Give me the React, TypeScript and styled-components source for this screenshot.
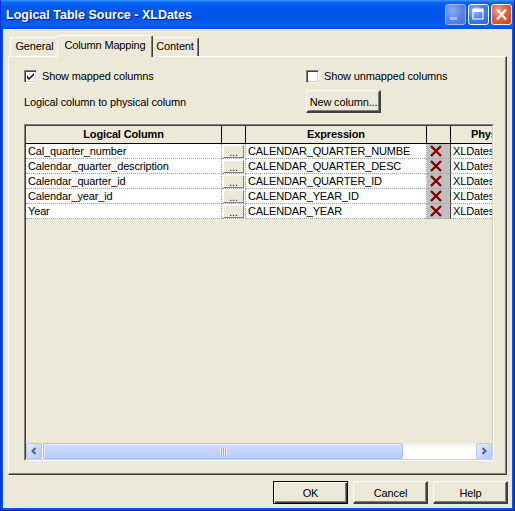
import styled, { createGlobalStyle } from "styled-components";

const GlobalStyle = createGlobalStyle`
  html, body {
    margin: 0;
    padding: 0;
  }
  body {
    width: 515px;
    height: 511px;
    overflow: hidden;
    font-family: "Liberation Sans", Arial, sans-serif;
    font-size: 11px;
    letter-spacing: -0.15px;
    color: #000;
  }
`;

const Window = styled.div`
  width: 515px;
  height: 511px;
  box-sizing: border-box;
  display: flex;
  flex-direction: column;
  background: #0054e3;
  border-left: 1px solid #0831d9;
  border-right: 1px solid #001ea0;
  border-bottom: 1px solid #001ea0;
`;

const TitleBar = styled.div`
  height: 29px;
  flex: none;
  display: flex;
  align-items: center;
  padding: 0 2px 0 5px;
  background: linear-gradient(
    180deg,
    #3d95ff 0%,
    #0a66f6 8%,
    #0058ee 22%,
    #0054e8 60%,
    #0060f5 88%,
    #0048d8 100%
  );
`;

const Title = styled.div`
  flex: 1;
  color: #fff;
  font-weight: bold;
  font-size: 12.5px;
  letter-spacing: 0;
  text-shadow: 1px 1px #0a1883;
  padding-top: 1px;
`;

const CaptionButtons = styled.div`
  display: flex;
  gap: 2px;
`;

const CaptionButton = styled.div<{ $kind: "min" | "max" | "close" }>`
  width: 21px;
  height: 21px;
  box-sizing: border-box;
  border-radius: 3px;
  border: 1px solid ${(p) => (p.$kind === "min" ? "#9db4ef" : "#fff")};
  display: flex;
  align-items: center;
  justify-content: center;
  background: ${(p) =>
    p.$kind === "close"
      ? "radial-gradient(circle at 35% 30%, #f0a58c 0%, #e2613f 45%, #c8421e 100%)"
      : p.$kind === "min"
      ? "radial-gradient(circle at 35% 30%, #8faaf0 0%, #5b80e6 55%, #4a6fdc 100%)"
      : "radial-gradient(circle at 35% 30%, #9bbcfc 0%, #3f7af5 50%, #2a62e8 100%)"};
`;

const Client = styled.div`
  flex: 1;
  margin: 0 2px 2px 2px;
  background: #ece9d8;
  padding: 6px 5px 0 5px;
  display: flex;
  flex-direction: column;
`;

const TabStrip = styled.div`
  height: 21px;
  display: flex;
  align-items: flex-end;
  padding-left: 2px;
  position: relative;
  z-index: 1;
`;

const Tab = styled.div<{ $active?: boolean; $w: number }>`
  box-sizing: border-box;
  width: ${(p) => p.$w + (p.$active ? 4 : 0)}px;
  height: ${(p) => (p.$active ? 22 : 19)}px;
  margin: ${(p) => (p.$active ? "0 -2px -1px -2px" : "0")};
  padding-top: ${(p) => (p.$active ? 3 : 2)}px;
  background: #ece9d8;
  border-top: 1px solid #fff;
  border-left: 1px solid #fff;
  border-right: 1px solid #404040;
  box-shadow: inset -1px 0 #808080;
  border-radius: 2px 2px 0 0;
  text-align: center;
  position: relative;
  z-index: ${(p) => (p.$active ? 2 : 1)};
`;

const Panel = styled.div`
  height: 419px;
  box-sizing: border-box;
  border: 1px solid;
  border-color: #fff #404040 #404040 #fff;
  box-shadow: inset -1px -1px #808080;
  padding: 13px 0 0 15px;
`;

const OptionRow = styled.div<{ $h: number; $top: number }>`
  display: grid;
  grid-template-columns: 282px auto;
  align-items: center;
  height: ${(p) => p.$h}px;
  margin-top: ${(p) => p.$top}px;
`;

const CheckLabel = styled.label`
  display: flex;
  align-items: center;
  gap: 5px;
  line-height: 13px;
`;

const CheckBox = styled.span`
  width: 13px;
  height: 13px;
  box-sizing: border-box;
  background: #fff;
  border: 1px solid;
  border-color: #808080 #fff #fff #808080;
  box-shadow: inset 1px 1px #404040, inset -1px -1px #d4d0c8;
  display: flex;
  align-items: center;
  justify-content: center;
`;

const Button = styled.div<{ $default?: boolean }>`
  width: 75px;
  height: 23px;
  box-sizing: border-box;
  background: #ece9d8;
  display: flex;
  align-items: center;
  justify-content: center;
  border: 1px solid ${(p) => (p.$default ? "#000" : "#fff")};
  box-shadow: ${(p) =>
    p.$default
      ? "inset 1px 1px #fff, inset -1px -1px #404040, inset -2px -2px #808080"
      : "inset -1px -1px #404040, inset 1px 1px #ece9d8, inset -2px -2px #808080"};
  border-right-color: ${(p) => (p.$default ? "#000" : "#404040")};
  border-bottom-color: ${(p) => (p.$default ? "#000" : "#404040")};
`;

const GridBox = styled.div`
  width: 470px;
  height: 337px;
  box-sizing: border-box;
  margin-top: 11px;
  border: 1px solid;
  border-color: #808080 #fff #fff #808080;
`;

const GridInner = styled.div`
  height: 100%;
  box-sizing: border-box;
  border: 1px solid;
  border-color: #404040 #d4d0c8 #d4d0c8 #404040;
  background: #ece9d8;
  display: flex;
  flex-direction: column;
`;

const columns = "196px 24px 181px 24px 1fr";

const HeaderRow = styled.div`
  display: grid;
  grid-template-columns: ${columns};
  height: 18px;
  box-sizing: border-box;
  border-bottom: 1px solid #000;
  flex: none;
`;

const HeaderCell = styled.div<{ $offset?: number }>`
  border-right: 1px solid #000;
  font-weight: bold;
  line-height: 17px;
  text-align: ${(p) => (p.$offset ? "left" : "center")};
  padding-left: ${(p) => p.$offset ?? 0}px;
  white-space: nowrap;
  overflow: hidden;
  &:last-child {
    border-right: none;
  }
`;

const DataRow = styled.div`
  display: grid;
  grid-template-columns: ${columns};
  height: 15px;
  flex: none;
`;

const Cell = styled.div<{ $grey?: boolean }>`
  box-sizing: border-box;
  background: ${(p) => (p.$grey ? "#c0c0c0" : "#fff")};
  border-right: 1px ${(p) => (p.$grey ? "solid #404040" : "dotted #a0a0a0")};
  border-bottom: 1px dotted #a0a0a0;
  padding-left: 2px;
  line-height: 14px;
  white-space: nowrap;
  overflow: hidden;
  display: flex;
  align-items: center;
  &:last-child {
    border-right: none;
  }
`;

const ButtonCell = styled.div`
  box-sizing: border-box;
  border-right: 1px dotted #a0a0a0;
  border-bottom: 1px dotted #a0a0a0;
  background: #fff;
  padding: 1px 1px 0 1px;
`;

const EllipsisButton = styled.div`
  height: 13px;
  box-sizing: border-box;
  background: #ece9d8;
  border: 1px solid;
  border-color: #fff #808080 #808080 #fff;
  text-align: center;
  line-height: 14px;
  font-size: 10px;
  letter-spacing: 0;
`;

const Filler = styled.div`
  flex: 1;
`;

const ScrollBar = styled.div`
  height: 16px;
  flex: none;
  display: flex;
  background: linear-gradient(180deg, #f3f1ec 0%, #fefefb 40%, #fcfcf8 100%);
`;

const ScrollArrow = styled.div`
  width: 16px;
  height: 16px;
  box-sizing: border-box;
  border: 1px solid #b7c9f6;
  border-radius: 2px;
  background: linear-gradient(135deg, #e6eefe 0%, #c6d6fc 60%, #b4c8fa 100%);
  display: flex;
  align-items: center;
  justify-content: center;
`;

const Track = styled.div`
  flex: 1;
  display: flex;
`;

const Thumb = styled.div<{ $w: number }>`
  width: ${(p) => p.$w}px;
  margin-left: 1px;
  box-sizing: border-box;
  border: 1px solid #a8bef5;
  border-radius: 2px;
  background: linear-gradient(180deg, #d2def9 0%, #c3d4fb 50%, #b9cbf7 100%);
  box-shadow: inset 1px 1px #e8eefd;
  display: flex;
  align-items: center;
  justify-content: center;
`;

const Grip = styled.div`
  width: 7px;
  height: 7px;
  background: repeating-linear-gradient(
    90deg,
    #eef3fe 0px,
    #eef3fe 1px,
    #8cabf0 1px,
    #8cabf0 2px
  );
`;

const ButtonRow = styled.div`
  display: flex;
  justify-content: flex-end;
  gap: 5px;
  margin: 6px -1px 0 0;
`;

const rows = [
  { logical: "Cal_quarter_number", expr: "CALENDAR_QUARTER_NUMBE" },
  { logical: "Calendar_quarter_description", expr: "CALENDAR_QUARTER_DESC" },
  { logical: "Calendar_quarter_id", expr: "CALENDAR_QUARTER_ID" },
  { logical: "Calendar_year_id", expr: "CALENDAR_YEAR_ID" },
  { logical: "Year", expr: "CALENDAR_YEAR" },
];

function DeleteMark() {
  return (
    <svg width="14" height="12" viewBox="0 0 14 12">
      <path d="M2 1 L12 11 M12 1 L2 11" stroke="#860000" strokeWidth="2.4" fill="none" />
    </svg>
  );
}

function Check({ checked }: { checked?: boolean }) {
  return (
    <CheckBox>
      {checked && (
        <svg width="7" height="7" viewBox="0 0 7 7">
          <path d="M0 2 L0 5 L2 7 L7 2 L7 0 L2 5 Z" fill="#000" />
        </svg>
      )}
    </CheckBox>
  );
}

function App() {
  return (
    <>
      <GlobalStyle />
      <Window>
        <TitleBar>
          <Title>Logical Table Source - XLDates</Title>
          <CaptionButtons>
            <CaptionButton $kind="min">
              <svg width="19" height="19" viewBox="0 0 19 19">
                <rect x="4" y="12" width="7" height="3" fill="#a9bcef" />
              </svg>
            </CaptionButton>
            <CaptionButton $kind="max">
              <svg width="19" height="19" viewBox="0 0 19 19">
                <path d="M4 4 H14 V14 H4 Z" stroke="#fff" strokeWidth="1.2" fill="none" />
                <rect x="4" y="4" width="10" height="3" fill="#fff" />
              </svg>
            </CaptionButton>
            <CaptionButton $kind="close">
              <svg width="19" height="19" viewBox="0 0 19 19">
                <path d="M5 4.5 L14 14.5 M14 4.5 L5 14.5" stroke="#fff" strokeWidth="2.2" />
              </svg>
            </CaptionButton>
          </CaptionButtons>
        </TitleBar>
        <Client>
          <TabStrip>
            <Tab $w={49}>General</Tab>
            <Tab $w={92} $active>
              Column Mapping
            </Tab>
            <Tab $w={48}>Content</Tab>
          </TabStrip>
          <Panel>
            <OptionRow $h={13} $top={0}>
              <CheckLabel>
                <Check checked />
                Show mapped columns
              </CheckLabel>
              <CheckLabel>
                <Check />
                Show unmapped columns
              </CheckLabel>
            </OptionRow>
            <OptionRow $h={23} $top={7}>
              <span>Logical column to physical column</span>
              <Button>New column...</Button>
            </OptionRow>
            <GridBox>
              <GridInner>
                <HeaderRow>
                  <HeaderCell>Logical Column</HeaderCell>
                  <HeaderCell />
                  <HeaderCell>Expression</HeaderCell>
                  <HeaderCell />
                  <HeaderCell $offset={20}>Physical Table</HeaderCell>
                </HeaderRow>
                {rows.map((r) => (
                  <DataRow key={r.logical}>
                    <Cell>{r.logical}</Cell>
                    <ButtonCell>
                      <EllipsisButton>...</EllipsisButton>
                    </ButtonCell>
                    <Cell>{r.expr}</Cell>
                    <Cell $grey>
                      <DeleteMark />
                    </Cell>
                    <Cell>XLDates.XLDATES</Cell>
                  </DataRow>
                ))}
                <Filler />
                <ScrollBar>
                  <ScrollArrow>
                    <svg width="8" height="8" viewBox="0 0 8 8">
                      <path d="M5.5 1 L2.5 4 L5.5 7" stroke="#4d6185" strokeWidth="2" fill="none" />
                    </svg>
                  </ScrollArrow>
                  <Track>
                    <Thumb $w={360}>
                      <Grip />
                    </Thumb>
                  </Track>
                  <ScrollArrow>
                    <svg width="8" height="8" viewBox="0 0 8 8">
                      <path d="M2.5 1 L5.5 4 L2.5 7" stroke="#4d6185" strokeWidth="2" fill="none" />
                    </svg>
                  </ScrollArrow>
                </ScrollBar>
              </GridInner>
            </GridBox>
          </Panel>
          <ButtonRow>
            <Button $default>OK</Button>
            <Button>Cancel</Button>
            <Button>Help</Button>
          </ButtonRow>
        </Client>
      </Window>
    </>
  );
}

export default App;
